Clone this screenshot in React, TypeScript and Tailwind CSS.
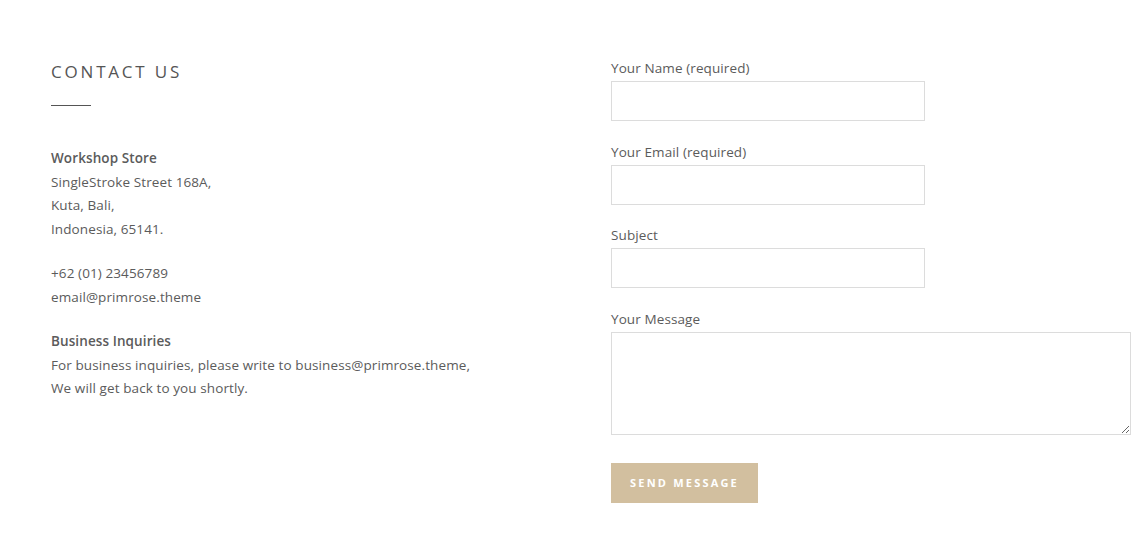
const fields = [
  { label: "Your Name (required)" },
  { label: "Your Email (required)" },
  { label: "Subject" },
];

const App = () => {
  return (
    <div className="w-[1144px] h-[552px] bg-white font-['Open_Sans',sans-serif] text-[13.5px] tracking-[0.1px] text-[#5b5b5b]">
      <div className="flex pt-[61px] pl-[51px]">
        <div className="w-[560px]">
          <h2 className="text-[17px] leading-[22px] tracking-[2.8px] text-[#555] uppercase">
            Contact Us
          </h2>
          <div className="w-[40px] h-px bg-[#555] mt-[22px]" />

          <div className="mt-[41px] leading-[23.5px]">
            <p className="font-semibold">Workshop Store</p>
            <p>SingleStroke Street 168A,</p>
            <p>Kuta, Bali,</p>
            <p>Indonesia, 65141.</p>
          </div>
          <div className="mt-[21px] leading-[23.5px]">
            <p>+62 (01) 23456789</p>
            <p>email@primrose.theme</p>
          </div>
          <div className="mt-[21px] leading-[23.5px]">
            <p className="font-semibold">Business Inquiries</p>
            <p>For business inquiries, please write to business@primrose.theme,</p>
            <p>We will get back to you shortly.</p>
          </div>
        </div>

        <form className="flex flex-col -mt-[3px]">
          {fields.map((f) => (
            <label key={f.label} className="flex flex-col mb-[20.7px]">
              <span className="leading-[20px] mb-[3px]">{f.label}</span>
              <input
                type="text"
                className="w-[314px] h-[40px] border border-[#dcdcdc] outline-none"
              />
            </label>
          ))}
          <label className="flex flex-col">
            <span className="leading-[20px] mb-[3px]">Your Message</span>
            <textarea className="w-[520px] h-[103px] border border-[#dcdcdc] outline-none resize-y" />
          </label>
          <button
            type="button"
            className="mt-[28px] w-[147px] h-[40px] bg-[#d2bf9f] text-white text-[11px] font-bold tracking-[2.2px] uppercase"
          >
            Send Message
          </button>
        </form>
      </div>
    </div>
  );
};

export default App;
